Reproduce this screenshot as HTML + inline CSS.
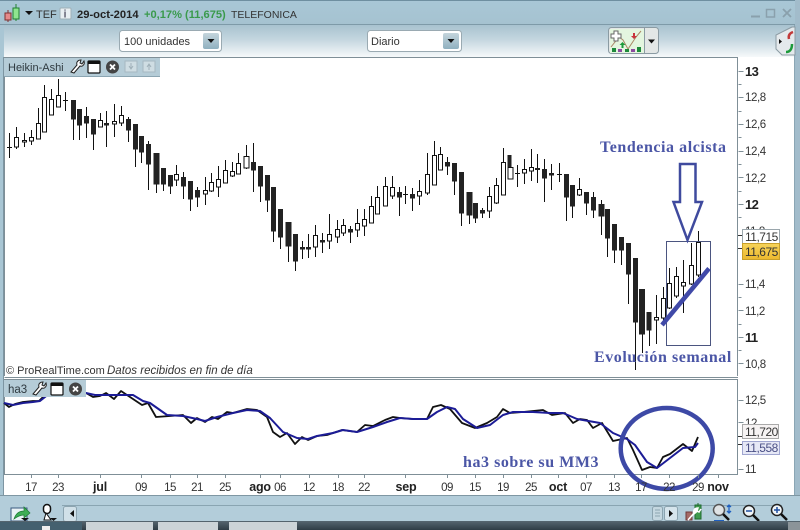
<!DOCTYPE html>
<html><head><meta charset="utf-8"><style>
html,body{margin:0;padding:0;width:800px;height:530px;overflow:hidden;background:#fff}
svg{display:block}
text{font-family:"Liberation Sans",sans-serif}
.s{font-family:"Liberation Serif",serif;font-weight:bold;fill:#4b56a6;font-size:16px;letter-spacing:.55px}
.a{font-size:11.5px;fill:#333;letter-spacing:-.4px}
.ab{font-size:13px;fill:#222;font-weight:bold;letter-spacing:-.6px}
.d{font-size:11.5px;fill:#333;text-anchor:middle;letter-spacing:-.5px}
.db{font-size:12.5px;fill:#222;font-weight:bold;text-anchor:middle;letter-spacing:-.2px}
</style></head><body>
<svg width="800" height="530" viewBox="0 0 800 530" xmlns="http://www.w3.org/2000/svg">
<defs>
<linearGradient id="t" x1="0" y1="0" x2="0" y2="1"><stop offset="0" stop-color="#a9c7d6"/><stop offset="1" stop-color="#a5c2d0"/></linearGradient>
<linearGradient id="g" x1="0" y1="0" x2="0" y2="1"><stop offset="0" stop-color="#a8c2cf"/><stop offset=".45" stop-color="#c4d6df"/><stop offset="1" stop-color="#f6f9fa"/></linearGradient>
<linearGradient id="b" x1="0" y1="0" x2="0" y2="1"><stop offset="0" stop-color="#c5d5dc"/><stop offset="1" stop-color="#8fb0c0"/></linearGradient>
<linearGradient id="y" x1="0" y1="0" x2="0" y2="1"><stop offset="0" stop-color="#f6d35a"/><stop offset="1" stop-color="#ecb92e"/></linearGradient>
<linearGradient id="k" x1="0" y1="0" x2="0" y2="1"><stop offset="0" stop-color="#566670"/><stop offset="1" stop-color="#2f3d46"/></linearGradient>
</defs>
<rect width="800" height="530" fill="#fff"/>
<!-- title bar -->
<rect width="800" height="25" fill="url(#t)"/>
<rect y="0" width="800" height="1" fill="#6f8fa0"/>
<rect y="24" width="800" height="1" fill="#7e9aa8"/>
<rect y="25" width="800" height="32" fill="url(#g)"/>
<!-- left and right borders -->
<rect x="0" y="25" width="4" height="470" fill="#a9c6d4"/>
<rect x="3" y="57" width="1" height="438" fill="#7d95a2"/>
<rect x="795" y="0" width="5" height="520" fill="#a2bccb"/>
<rect x="794" y="25" width="1" height="470" fill="#8ba6b4"/>
<!-- logo -->
<rect x="5" y="13" width="6" height="7" fill="#e58a8a" stroke="#803030" stroke-width="1"/><path d="M8 10v3M8 20v2" stroke="#803030"/>
<rect x="13" y="8" width="6" height="11" fill="#8fe58f" stroke="#208030" stroke-width="1"/><path d="M16 4v4M16 19v2" stroke="#208030"/>
<path d="M25 11h8l-4 4z" fill="#111"/>
<text x="36" y="18" font-size="11" fill="#333">TEF</text>
<rect x="60" y="8" width="11" height="11" rx="1" fill="#e9eff2" stroke="#9fb0b8"/><text x="63.500" y="17.500" font-size="11" font-weight="bold" fill="#667">i</text>
<text x="77" y="18" font-size="11.200" font-weight="bold" fill="#222">29-oct-2014</text>
<text x="144" y="18" font-size="11.100" font-weight="bold" fill="#3a9a4c">+0,17% (11,675)</text>
<text x="231" y="18" font-size="10.500" fill="#333">TELEFONICA</text>
<!-- window buttons -->
<path d="M751 16.500h9" stroke="#8aa0ac" stroke-width="2"/>
<rect x="766.500" y="9.500" width="8" height="7.500" fill="none" stroke="#8aa0ac" stroke-width="1.500"/>
<path d="M783 9l8 8M791 9l-8 8" stroke="#8aa0ac" stroke-width="1.800"/>
<!-- selects -->
<rect x="119.500" y="30.500" width="102" height="21" rx="3" fill="#fff" stroke="#9aaab2"/>
<text x="124" y="45" font-size="11" fill="#333">100 unidades</text>
<rect x="203" y="33" width="16" height="16" rx="2" fill="url(#b)"/><path d="M207.500 39h7l-3.500 4z" fill="#111"/>
<rect x="367.500" y="30.500" width="94" height="21" rx="3" fill="#fff" stroke="#9aaab2"/>
<text x="371" y="45" font-size="11" fill="#333">Diario</text>
<rect x="443" y="33" width="16" height="16" rx="2" fill="url(#b)"/><path d="M447.500 39h7l-3.500 4z" fill="#111"/>
<!-- indicator button -->
<rect x="608.500" y="27.500" width="50" height="26" rx="3" fill="#e3e7e6" stroke="#8b9ba3"/>
<rect x="610" y="29" width="34" height="24" fill="#e4f6df"/>
<path d="M644.500 28v25" stroke="#8b9ba3"/>
<path d="M648 39.500h7l-3.500 4z" fill="#111"/>
<path d="M611 47l8-10 4 3 5 9 8-12 5-6" fill="none" stroke="#a86" stroke-width="1"/>
<path d="M614 31h4v3h3v4h-3v3h-4v-3h-3v-4h3z" fill="#fff" stroke="#666"/>
<path d="M622.500 42l-3 3h2v3h2v-3h2z" fill="#1d9a3b"/>
<path d="M633 33h2v3h2l-3 3-3-3h2z" fill="#c9343c"/>
<path d="M612 48h4v4h-4zM625 49h4v3h-4zM637 47h4v5h-4z" fill="#1d8a3b"/><path d="M618 49h4v3h-4zM631 49h4v3h-4z" fill="#8c4aa0"/>
<!-- side icon -->
<path d="M792 27l-6 3-10 5v14l6 6h13V27z" fill="#e4e9ec" stroke="#8b9ba3"/>
<path d="M779 39l3 2.500-3 2.500z" fill="#111"/>
<path d="M793 32c-3 1-5 3-4 7" fill="none" stroke="#c23a3a" stroke-width="2.500"/>
<path d="M786 52c4 0 6-3 6-8" fill="none" stroke="#1d9a3b" stroke-width="2.500"/>
<!-- chart frames -->
<rect x="4.500" y="57.500" width="733" height="320" fill="#fff" stroke="#7f8f97"/>
<rect x="4.500" y="379.500" width="733" height="95" fill="#fff" stroke="#7f8f97"/>
<rect x="4" y="376" width="734" height="3" fill="#fff"/>
<path d="M4.500 377.500H738M4.500 379.500H738" stroke="#7f8f97"/>
<!-- candles -->
<path stroke="#111" stroke-width="1" fill="none" d="M9.500 133V158M16.500 127V149M24.500 133V147M31.500 130V145M38.500 108V139M44.500 85V132M51.500 89V115M58.500 79V107M65.500 92V111M73.500 100V140M79.500 109V140M86.500 107V138M93.500 119V150M100.500 113V127M106.500 111V147M114.500 104V137M121.500 106V126M128.500 117V142M135.500 124V167M141.500 136V163M148.500 141V190M156.500 153V193M163.500 168V191M170.500 175V194M176.500 165V186M183.500 172V199M190.500 181V211M197.500 187V207M205.500 177V205M211.500 173V192M218.500 166V197M225.500 160V183M232.500 162V177M238.500 153V174M246.500 145V169M253.500 143V192M260.500 166V202M267.500 175V212M273.500 187V242M280.500 209V249M288.500 222V262M295.500 234V271M302.500 241V259M308.500 234V258M315.500 225V257M322.500 233V253M329.500 214V249M337.500 220V243M343.500 219V236M350.500 226V243M357.500 209V237M364.500 209V236M371.500 196V223M377.500 186V214M385.500 177V206M392.500 176V199M399.500 187V216M405.500 186V204M412.500 188V211M419.500 180V205M427.500 153V195M434.500 141V185M440.500 147V170M447.500 157V175M454.500 163V195M461.500 172V226M469.500 192V224M475.500 203V223M482.500 208V218M489.500 187V218M496.500 178V204M503.500 148V195M510.500 155V179M517.500 165V187M524.500 159V184M531.500 149V181M537.500 154V183M544.500 159V202M551.500 164V190M559.500 163V182M566.500 174V221M572.500 185V218M579.500 178V196M586.500 192V215M593.500 192V218M601.500 200V235M607.500 209V257M614.500 224V263M621.500 237V265M628.500 243V304M635.500 258V370M642.500 289V353M649.500 312V346M656.500 295V344M663.500 287V321M669.500 268V309M676.500 267V298M683.500 260V313M691.500 243V285M698.500 231V277"/>
<path stroke="#111" stroke-width="1" d="M7 147.500h5M63 100.500h5M403 194.500h5M557 174.500h5M515 173.500h5"/>
<path fill="#222" stroke="#222" stroke-width="1" d="M71.500 100.500h4V119h-4zM77.500 109.500h4V125h-4zM84.500 116.500h4V123h-4zM91.500 119.500h4V134h-4zM104.500 123.500h4V125h-4zM126.500 119.500h4V130h-4zM133.500 124.500h4V149h-4zM139.500 136.500h4V152h-4zM146.500 144.500h4V164h-4zM154 153.500h5V184h-5zM161.500 168.500h4V184h-4zM168.500 175.500h4V186h-4zM181.500 177.500h4V186h-4zM188.500 181.500h4V199h-4zM195.500 190.500h4V197h-4zM251.500 162.500h4V170h-4zM258.500 166.500h4V186h-4zM265.500 175.500h4V200h-4zM271.500 187.500h4V231h-4zM278.500 209.500h4V237h-4zM286 222.500h5V246h-5zM293.500 234.500h4V261h-4zM300.500 247.500h4V249h-4zM306.500 247.500h4V249h-4zM320.500 240.500h4V242h-4zM348.500 229.500h4V232h-4zM397.500 192.500h4V197h-4zM410.500 194.500h4V198h-4zM445.500 162.500h4V166h-4zM452.500 163.500h4V181h-4zM459.500 172.500h4V213h-4zM467 192.500h5V215h-5zM473.500 203.500h4V218h-4zM480.500 210.500h4V213h-4zM508 155.500h3V167h-3zM535.500 168.500h4V169.500h-4zM542.500 169.500h4V178h-4zM549.500 173.500h4V175h-4zM564.500 174.500h4V197h-4zM570.500 185.500h4V206h-4zM584.500 192.500h4V203h-4zM591.500 197.500h4V210h-4zM599 204.500h5V216h-5zM605.500 209.500h4V238h-4zM612.500 224.500h4V250h-4zM619.500 237.500h4V250h-4zM626.500 243.500h4V274h-4zM633.500 258.500h4V322h-4zM639.500 289.500h5V334h-5zM647 312.500h4V330h-4z"/>
<path fill="#fff" stroke="#111" stroke-width="1" d="M14.500 137.500h4V147h-4zM22.500 140.500h4V142h-4zM29.500 137.500h4V141h-4zM36.500 123.500h4V139h-4zM42.500 97.500h4V132h-4zM49.500 99.500h4V115h-4zM56.500 95.500h4V107h-4zM98.500 120.500h4V127h-4zM112.500 121.500h4V124h-4zM119.500 115.500h4V123h-4zM174.500 174.500h4V180h-4zM203.500 190.500h4V194h-4zM209.500 182.500h4V191h-4zM216.500 179.500h4V187h-4zM223.500 170.500h4V183h-4zM230.500 171.500h4V176h-4zM236.500 163.500h4V174h-4zM244 156.500h5V168h-5zM313.500 235.500h4V247h-4zM327.500 234.500h4V241h-4zM335.500 229.500h4V237h-4zM341.500 225.500h4V233h-4zM355.500 223.500h4V230h-4zM362.500 219.500h4V226h-4zM369.500 206.500h4V223h-4zM375.500 197.500h4V214h-4zM383.500 186.500h4V206h-4zM390.500 187.500h4V196h-4zM417.500 191.500h4V196h-4zM425.500 174.500h4V193h-4zM432.500 155.500h4V185h-4zM438.500 154.500h4V170h-4zM487.500 196.500h4V211h-4zM494.500 185.500h4V203h-4zM501.500 162.500h4V195h-4zM508 167.500h5V179h-5zM522.500 169.500h4V173h-4zM529.500 167.500h4V171h-4zM577.500 189.500h4V195h-4zM654.500 317.500h4V320h-4zM661.500 298.500h4V318h-4zM667.500 283.500h4V308h-4zM674.500 276.500h4V296h-4zM681.500 282.500h4V286h-4zM689.500 265.500h4V284h-4zM696.500 242.500h4V275h-4z"/>
<!-- annotations -->
<rect x="666.500" y="241.500" width="44" height="104" fill="none" stroke="#4b5580" stroke-width="1"/>
<path d="M680 164H695.500V202H702L687.500 240 673.500 202H680Z" fill="none" stroke="#3f4a9e" stroke-width="2.500"/>
<path d="M662 325L709 268.500" stroke="#4049a8" stroke-width="4.500"/>
<text class="s" x="600" y="152">Tendencia alcista</text>
<text class="s" x="594" y="362">Evolución semanal</text>
<text class="s" x="463" y="467">ha3 sobre su MM3</text>
<text x="6" y="374" font-size="11" fill="#333">© ProRealTime.com</text>
<text x="107" y="374" font-size="11.500" font-style="italic" fill="#333">Datos recibidos en fin de día</text>
<!-- indicator lines -->
<g fill="none" stroke-linejoin="round">
<path stroke="#111" stroke-width="1.800" d="M4 403L9 407 15 404 23 402 33 401 39 401 43 397 60 392 86 393 93 397 100 396 106 393 114 399 121 391 130 397 142 405 148 403 156 417 170 416 183 415 191 423 197 418 205 422 212 417 218 419 227 412 233 413 247 409 257 410 267 417 273 432 280 437 287 433 295 444 302 437 308 440 317 436 327 435 342 430 357 432 365 425 373 426 385 420 393 417 400 418 413 419 427 419 433 407 441 405 450 409 462 423 475 428 487 423 497 417 503 409 510 413 523 412 543 410 552 415 565 413 573 423 580 419 587 420 593 428 602 423 613 441 627 438 633 450 642 470 650 467 657 468 663 457 670 454 683 444 692 451 698 437"/>
<path stroke="#1c1c96" stroke-width="2" d="M4 403L13 405 23 403 33 402 40 401 50 393 86 393 95 395 107 395 117 395 133 395 143 401 150 403 167 415 183 416 197 419 205 421 217 417 233 413 247 410 260 411 270 418 283 432 297 438 308 439 317 436 333 433 343 430 357 432 373 427 387 422 400 418 413 419 427 419 437 412 447 407 455 409 463 419 477 428 490 425 503 415 513 412 533 412 550 413 563 413 577 419 600 423 613 433 627 439 635 445 647 462 657 468 670 458 683 448 695 447 698 443"/>
</g>
<ellipse cx="666.700" cy="448.500" rx="46" ry="40.500" fill="none" stroke="#3d49a6" stroke-width="4.500"/>
<!-- top indicator toolbars -->
<rect x="4" y="58" width="156" height="18" fill="#b5ccd7"/><rect x="4" y="76" width="156" height="1" fill="#8ba5b2"/>
<text x="8" y="71" font-size="11" fill="#2f3a40">Heikin-Ashi</text>
<path d="M71 72l6-7c-1-3 1-5 4-5l-1 3 2 1 2-3c1 3-1 6-4 5l-6 7z" fill="#fff" stroke="#222"/>
<rect x="88" y="61" width="12" height="12" rx="1" fill="#fff" stroke="#111" stroke-width="1.200"/><rect x="88" y="61" width="12" height="3" fill="#111"/>
<circle cx="112.500" cy="67" r="6.500" fill="#444"/><path d="M110 64.500l5 5M115 64.500l-5 5" stroke="#fff" stroke-width="1.800"/>
<rect x="125" y="61" width="12" height="11" fill="#cfdde3" stroke="#a6b8c1"/><path d="M131 63v5M129 66l2 3 2-3" stroke="#9fb0b8" fill="none"/>
<rect x="143" y="61" width="12" height="11" fill="#cfdde3" stroke="#a6b8c1"/><path d="M149 70v-5M147 67l2-3 2 3" stroke="#9fb0b8" fill="none"/>
<rect x="4" y="380" width="82" height="17" fill="#b5ccd7"/>
<text x="8" y="393" font-size="11.500" fill="#2f3a40">ha3</text>
<path d="M33 394l6-7c-1-3 1-5 4-5l-1 3 2 1 2-3c1 3-1 6-4 5l-6 7z" fill="#fff" stroke="#222"/>
<rect x="51" y="383" width="12" height="12" rx="1" fill="#fff" stroke="#111" stroke-width="1.200"/><rect x="51" y="383" width="12" height="3" fill="#111"/>
<circle cx="75.500" cy="389" r="6.500" fill="#444"/><path d="M73 386.500l5 5M78 386.500l-5 5" stroke="#fff" stroke-width="1.800"/>
<!-- right axis -->
<path stroke="#7f8f97" d="M738.500 71.500h5M738.500 84.500h3M738.500 97.500h5M738.500 111.500h3M738.500 124.500h5M738.500 137.500h3M738.500 151.500h5M738.500 164.500h3M738.500 177.500h5M738.500 191.500h3M738.500 204.500h5M738.500 217.500h3M738.500 284.500h5M738.500 297.500h3M738.500 310.500h5M738.500 324.500h3M738.500 337.500h5M738.500 350.500h3M738.500 363.500h5M738.500 400.500h5M738.500 469.500h5M738.500 422.500h5"/>
<text class="ab" x="745" y="76">13</text>
<text class="a" x="745" y="101">12,8</text>
<text class="a" x="745" y="128">12,6</text>
<text class="a" x="745" y="155">12,4</text>
<text class="a" x="745" y="182">12,2</text>
<text class="ab" x="745" y="209">12</text>
<text class="a" x="745" y="235">11,8</text>
<text class="a" x="745" y="288">11,4</text>
<text class="a" x="745" y="315">11,2</text>
<text class="ab" x="745" y="342">11</text>
<text class="a" x="745" y="368">10,8</text>
<text class="a" x="745" y="404">12,5</text>
<text class="a" x="745" y="427">12</text>
<text class="a" x="745" y="473">11</text>
<rect x="742.500" y="229.500" width="37" height="14" fill="#fff" stroke="#9aa6ac"/>
<rect x="742.500" y="243.500" width="37" height="16" fill="url(#y)" stroke="#c9a02a"/>
<text x="745" y="241" font-size="12" letter-spacing="-.5" fill="#333">11,715</text>
<text x="745" y="256" font-size="12" letter-spacing="-.5" fill="#333">11,675</text>
<path d="M738 235.500h4M738 248.500h4" stroke="#333"/>
<rect x="742.500" y="424.500" width="36" height="14" fill="#f6f3f3" stroke="#a9a9a9"/>
<rect x="742.500" y="441.500" width="37" height="13" fill="#e6e8f6" stroke="#a0a6d0"/>
<text x="745" y="436" font-size="12" letter-spacing="-.5" fill="#333">11,720</text>
<text x="745" y="452" font-size="12" letter-spacing="-.5" fill="#4a4f85">11,558</text>
<path d="M738 436.500h4M738 444.500h4" stroke="#333"/>
<!-- x axis -->
<path stroke="#7f8f97" d="M31.500 475v3M58.500 475v3M100.500 475v3M141.500 475v3M170.500 475v3M197.500 475v3M225.500 475v3M260.500 475v3M280.500 475v3M309.500 475v3M338.500 475v3M364.500 475v3M405.500 475v3M447.500 475v3M475.500 475v3M503.500 475v3M531.500 475v3M558.500 475v3M586.500 475v3M614.500 475v3M641.500 475v3M669.500 475v3M698.500 475v3M718.500 475v3"/>
<text class="d" x="31" y="491">17</text><text class="d" x="58" y="491">23</text><text class="db" x="100" y="491">jul</text>
<text class="d" x="141" y="491">09</text><text class="d" x="170" y="491">15</text><text class="d" x="197" y="491">21</text>
<text class="d" x="225" y="491">25</text><text class="db" x="260" y="491">ago</text><text class="d" x="280" y="491">06</text>
<text class="d" x="309" y="491">12</text><text class="d" x="338" y="491">18</text><text class="d" x="364" y="491">22</text>
<text class="db" x="406" y="491">sep</text><text class="d" x="447" y="491">09</text><text class="d" x="475" y="491">15</text>
<text class="d" x="503" y="491">19</text><text class="d" x="531" y="491">25</text><text class="db" x="558" y="491">oct</text>
<text class="d" x="586" y="491">07</text><text class="d" x="614" y="491">13</text><text class="d" x="641" y="491">17</text>
<text class="d" x="669" y="491">22</text><text class="d" x="698" y="491">29</text><text class="db" x="718" y="491">nov</text>
<!-- bottom toolbar -->
<rect x="0" y="495" width="800" height="26" fill="#b3cdda"/>
<rect x="0" y="495" width="800" height="1" fill="#7f97a3"/>
<rect x="62" y="505" width="720" height="1" fill="#8aa5b2"/>
<rect x="63.500" y="506.500" width="13" height="15" rx="2" fill="#d0e0e8" stroke="#8ca4b0"/><path d="M74 510v7l-4-3.500z" fill="#111"/>
<rect x="652.500" y="506.500" width="10" height="14" rx="2" fill="#c4d7e0" stroke="#8ca4b0"/>
<path d="M655 510h5M655 513h5M655 516h5" stroke="#8ca4b0"/>
<rect x="664.500" y="506.500" width="13" height="14" rx="2" fill="#d5e4ec" stroke="#8ca4b0"/><path d="M669 510v7l4-3.500z" fill="#111"/>
<!-- bottom-left icons -->
<rect x="11" y="508" width="16" height="13" fill="#e9f2f5" stroke="#3a5a80"/>
<path d="M14 519c2-6 6-8 10-8v-4l6 6-6 5v-3c-3 0-6 1-10 4z" fill="#3fae55" stroke="#1c7a34" stroke-width=".7"/>
<path d="M21 518h8l-4 3z" fill="#111"/>
<path d="M47 506v5M47 515v5" stroke="#111" stroke-width="2.500"/>
<rect x="43.500" y="504.500" width="7" height="9" rx="3.500" fill="#fff" stroke="#111" stroke-width="1.500"/>
<path d="M46 513l5 7h-7z" fill="#fff" stroke="#111"/>
<path d="M50 518h7l-3.500 3z" fill="#111"/>
<!-- bottom-right icons -->
<rect x="695" y="505" width="6" height="14" fill="#3f9a4e" stroke="#1f6a2e"/><path d="M698 503v3" stroke="#1f6a2e"/>
<rect x="686" y="512" width="6" height="8" fill="#a56a66" stroke="#703a3a"/>
<path d="M688 520l6-7c-1-3 1-5 4-5l-1 3 2 1 2-3" fill="#fff" stroke="#fff" stroke-width="1.500"/>
<circle cx="719" cy="510" r="5.500" fill="#dfe3e5" stroke="#555" stroke-width="1.500"/><path d="M723 514l6 6" stroke="#111" stroke-width="2.500"/>
<path d="M729 505v8M727 507l2-2 2 2M727 511l2 2 2-2" fill="none" stroke="#1e5fc0" stroke-width="1.300"/>
<path d="M714 521h10" stroke="#1e5fc0" stroke-width="2"/>
<circle cx="749" cy="511" r="5.500" fill="#f2f6f8" stroke="#222" stroke-width="1.500"/><path d="M746 511h6" stroke="#1e4fa0" stroke-width="1.500"/><path d="M753 515l6 6" stroke="#111" stroke-width="2.500"/>
<circle cx="777" cy="510" r="5.500" fill="#f2f6f8" stroke="#222" stroke-width="1.500"/><path d="M774 510h6M777 507v6" stroke="#1e4fa0" stroke-width="1.500"/><path d="M781 514l6 6" stroke="#111" stroke-width="2.500"/>
<!-- taskbar -->
<rect x="0" y="521" width="800" height="9" fill="url(#k)"/>
<rect x="86" y="522" width="67" height="8" fill="#ccd4d8"/>
<rect x="158" y="522" width="60" height="8" fill="#ccd4d8"/>
<rect x="229" y="522" width="68" height="8" fill="#ccd4d8"/>
<rect x="0" y="522" width="82" height="8" fill="#44606f"/>
<path d="M42 526h8v4h-8z" fill="#eee"/>
<rect x="788" y="522" width="12" height="8" fill="#8b9499"/>
</svg>
</body></html>
